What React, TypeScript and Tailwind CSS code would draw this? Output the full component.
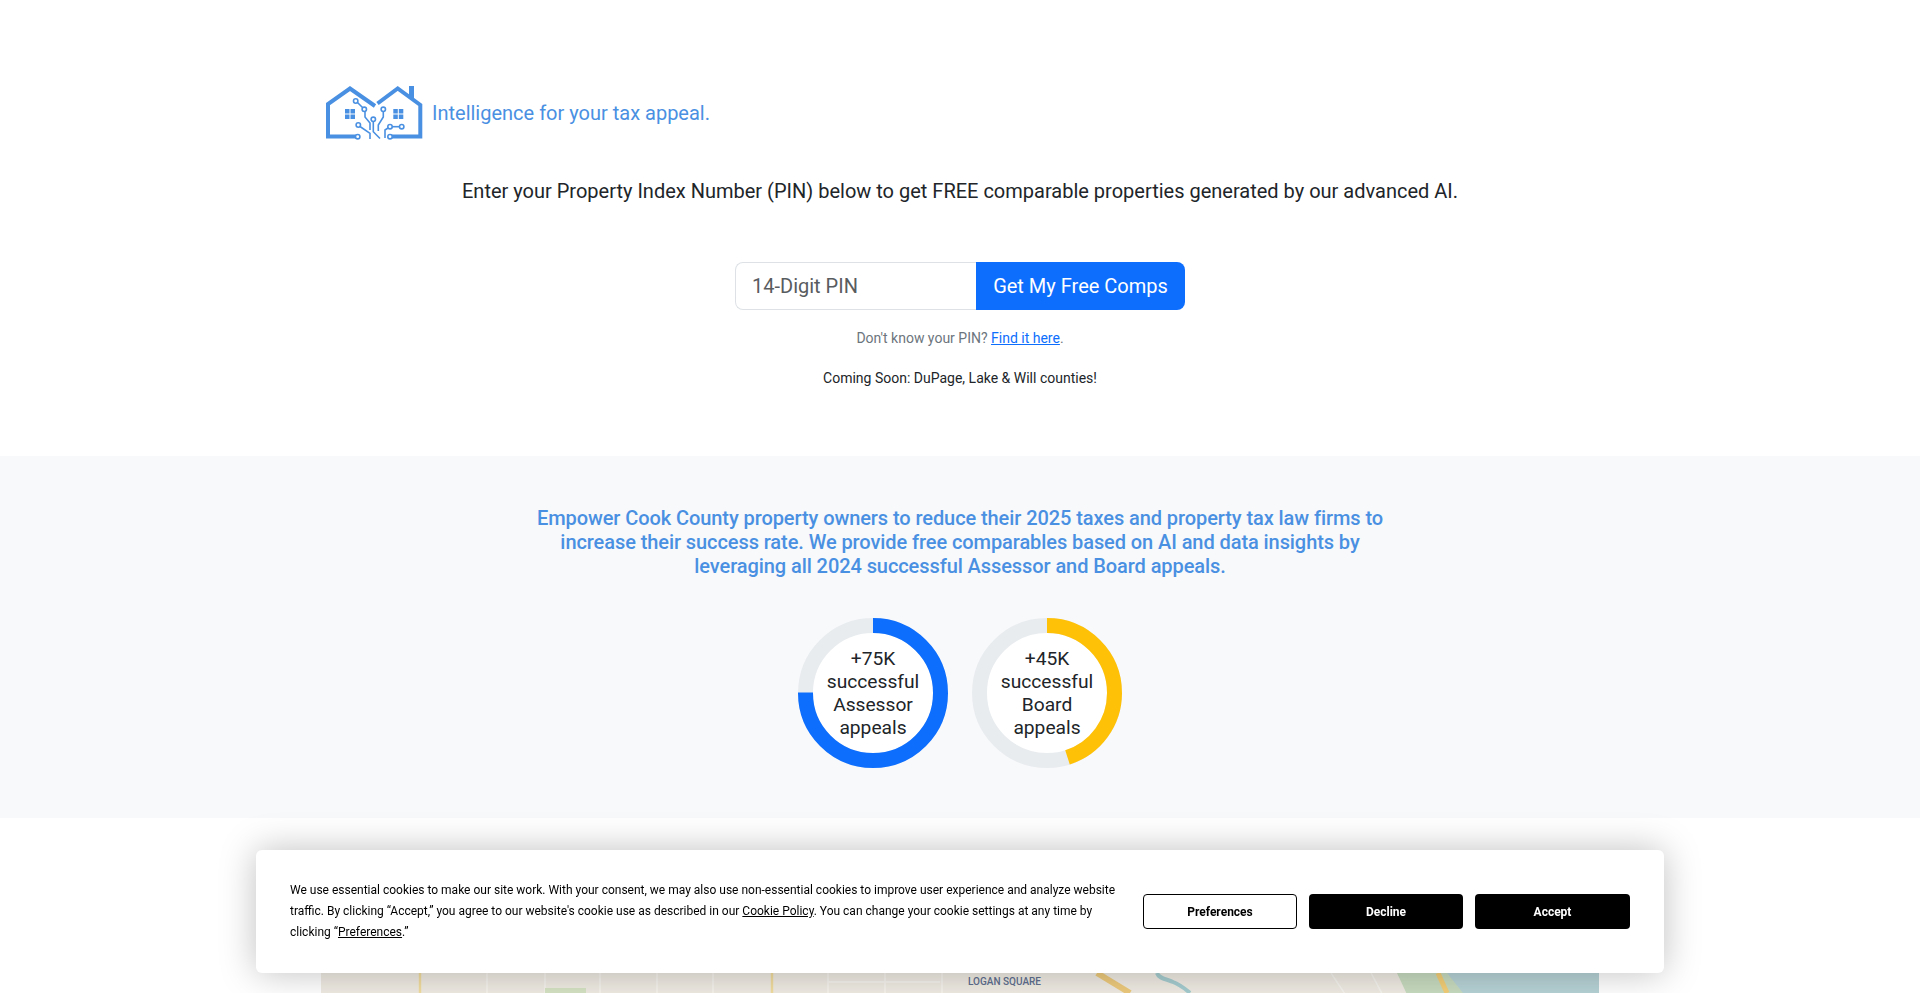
const font = "font-['Roboto',sans-serif]";

function Logo() {
  return (
    <svg width="100" height="56" viewBox="0 0 100 56" fill="none" className="shrink-0">
      <g stroke="#4a90e2" strokeWidth="4" fill="none">
        <path d="M33 51.500H3V19L25 3.500L50 21" />
        <path d="M52.500 18.500L72.700 3.500L95.300 20V51.500H66" />
      </g>
      <rect x="84" y="1" width="5" height="12" fill="#4a90e2" />
      <g fill="#4a90e2">
        <rect x="20" y="24" width="4.500" height="4.500" />
        <rect x="25.500" y="24" width="4.500" height="4.500" />
        <rect x="20" y="29.500" width="4.500" height="4.500" />
        <rect x="25.500" y="29.500" width="4.500" height="4.500" />
        <rect x="68.300" y="24" width="4.500" height="4.500" />
        <rect x="73.800" y="24" width="4.500" height="4.500" />
        <rect x="68.300" y="29.500" width="4.500" height="4.500" />
        <rect x="73.800" y="29.500" width="4.500" height="4.500" />
      </g>
      <g stroke="#4a90e2" strokeWidth="1.600" fill="#fff">
        <path d="M32.500 17.500L38 23" />
        <path d="M40 26.500V32L45 38V45" />
        <path d="M58.300 26.500V32L53.300 40V46" />
        <path d="M48.300 36.500V46.700L55 53.500" />
        <path d="M35 41.500L45 48.300V54" />
        <path d="M63 43L60 45V53" />
        <path d="M67 41.700H74.500" />
        <circle cx="30.700" cy="16" r="2.200" />
        <circle cx="39.300" cy="24.300" r="2.200" />
        <circle cx="58.300" cy="24.300" r="2.200" />
        <circle cx="48.300" cy="34.300" r="2.200" />
        <circle cx="33.300" cy="40" r="2.200" />
        <circle cx="32.700" cy="51.700" r="2.200" />
        <circle cx="65" cy="51.700" r="2.200" />
        <circle cx="65" cy="41.700" r="2.200" />
        <circle cx="76.700" cy="41.700" r="2.200" />
      </g>
    </svg>
  );
}

function Ring({ color, pct, lines }: { color: string; pct: number; lines: string[] }) {
  const c = 2 * Math.PI * 67.5;
  return (
    <div className="relative w-[150px] h-[150px]">
      <svg width="150" height="150" viewBox="0 0 150 150" className="-rotate-90">
        <circle cx="75" cy="75" r="67.500" fill="#fff" stroke="#e9ecef" strokeWidth="15" />
        <circle cx="75" cy="75" r="67.500" fill="none" stroke={color} strokeWidth="15" strokeDasharray={`${(c * pct) / 100} ${c}`} />
      </svg>
      <div className="absolute inset-0 flex flex-col items-center justify-center text-[19.2px] leading-[23px] text-[#212529] text-center">
        {lines.map((l) => (
          <div key={l}>{l}</div>
        ))}
      </div>
    </div>
  );
}

function MapStrip() {
  return (
    <div className="relative mx-auto w-[1278px] h-[200px] overflow-hidden bg-[#f0ece4]">
      <svg width="1278" height="200" viewBox="0 0 1278 200" className="block">
        <rect x="0" y="0" width="1278" height="200" fill="#f0ece4" />
        <path d="M1076 0H1130L1150 30H1090Z" fill="#c8dcc0" />
        <path d="M1126 0H1278V30H1150Z" fill="#b7d3d6" />
        <g stroke="#f7f5f0" strokeWidth="1.500" fill="none">
          <path d="M166 0V30M224 0V30M279 0V30M336 0V30M392 0V30M507 0V30M564 0V30M621 0V30M507 9H619" />
          <path d="M1010 0L1030 30M1050 0L1066 30" />
        </g>
        <path d="M99 0V30M451 0V30" stroke="#f2dd9f" strokeWidth="2.500" />
        <path d="M776 0L809 20" stroke="#eecb7d" strokeWidth="6" fill="none" />
        <path d="M836 0C838 6 846 6 852 9C860 12 864 16 869 20" stroke="#a6cdd0" strokeWidth="4" fill="none" />
        <path d="M1117 0L1126 20" stroke="#f3cf78" strokeWidth="5" />
        <rect x="224" y="15" width="41" height="20" fill="#d6e3c4" />
      </svg>
      <div className="absolute left-[647px] top-[3px] text-[10px] leading-3 font-medium text-[#5f6f8f]">LOGAN SQUARE</div>
    </div>
  );
}

export default function App() {
  return (
    <div className={`relative h-screen overflow-hidden bg-white ${font}`}>
      <header className="mx-auto w-[1320px] px-[12px] pt-[85px]">
        <div className="flex items-center gap-[7px] pl-[13px] h-[56px]">
          <Logo />
          <span className="text-[20px] text-[#4a90e2]">Intelligence for your tax appeal.</span>
        </div>
        <p className="mt-[35px] text-center text-[20px] leading-[30px] text-[#212529]">
          Enter your Property Index Number (PIN) below to get FREE comparable properties generated by our advanced AI.
        </p>
        <div className="mt-[56px] flex justify-center">
          <div className="w-[241px] h-[48px] border border-r-0 border-[#dee2e6] rounded-l-lg bg-white flex items-center pl-[16px] text-[20px] text-[#595c5f]">
            14-Digit PIN
          </div>
          <button className="w-[209px] h-[48px] bg-[#0d6efd] text-white text-[20px] rounded-r-lg">Get My Free Comps</button>
        </div>
        <p className="mt-[18px] text-center text-[14px] leading-[21px] text-[#6c757d]">
          Don't know your PIN? <a className="text-[#0d6efd] underline">Find it here</a>.
        </p>
        <p className="mt-[19px] text-center text-[14px] leading-[21px] text-[#212529]">Coming Soon: DuPage, Lake &amp; Will counties!</p>
      </header>

      <section className="mt-[67px] h-[362px] bg-[#f8f9fb] pt-[50px]">
        <p className="mx-auto w-[870px] text-center text-[20px] leading-[24px] font-medium tracking-[-0.08px] text-[#4a90e2]">
          Empower Cook County property owners to reduce their 2025 taxes and property tax law firms to increase their success rate. We provide free comparables based on AI and data insights by leveraging all 2024 successful Assessor and Board appeals.
        </p>
        <div className="mt-[40px] flex justify-center gap-[24px]">
          <Ring color="#0d6efd" pct={75} lines={['+75K', 'successful', 'Assessor', 'appeals']} />
          <Ring color="#ffc107" pct={45} lines={['+45K', 'successful', 'Board', 'appeals']} />
        </div>
      </section>

      <div className="pt-[155px]">
        <MapStrip />
      </div>

      {/* cookie banner */}
      <div className="fixed left-[256px] top-[850px] w-[1408px] h-[123px] bg-white rounded-md shadow-[0_0_36px_rgba(0,0,0,0.25)] flex items-center justify-between pl-[34px] pr-[34px]">
        <p className="w-[830px] text-[12px] leading-[21px] text-[#000]">
          We use essential cookies to make our site work. With your consent, we may also use non-essential cookies to improve user experience and analyze website traffic. By clicking “Accept,” you agree to our website's cookie use as described in our <a className="underline">Cookie Policy</a>. You can change your cookie settings at any time by clicking “<a className="underline">Preferences</a>.”
        </p>
        <div className="flex gap-[12px]">
          <button className="w-[154px] h-[35px] border border-black rounded text-[12px] font-bold text-black bg-white">Preferences</button>
          <button className="w-[154px] h-[35px] rounded text-[12px] font-bold text-white bg-black">Decline</button>
          <button className="w-[155px] h-[35px] rounded text-[12px] font-bold text-white bg-black">Accept</button>
        </div>
      </div>
    </div>
  );
}
